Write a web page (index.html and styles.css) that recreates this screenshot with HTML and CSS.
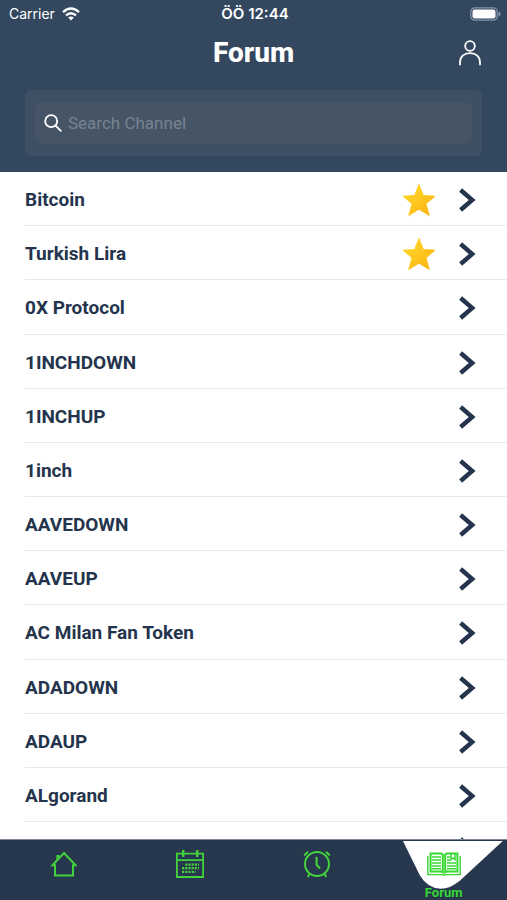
FILE: index.html
```html
<!DOCTYPE html>
<html lang="en">
<head>
<meta charset="utf-8">
<meta name="viewport" content="width=device-width, initial-scale=1">
<title>Forum</title>
<link rel="stylesheet" href="styles.css">
</head>
<body>
<svg class="defs" aria-hidden="true">
  <defs>
    <linearGradient id="gold" x1="0" y1="0" x2="1" y2="1">
      <stop offset="0" stop-color="#ffdc2e"/>
      <stop offset="1" stop-color="#fdb110"/>
    </linearGradient>
    <symbol id="star" viewBox="0 0 34 34">
      <path fill="url(#gold)" stroke="url(#gold)" stroke-width="1" stroke-linejoin="round" d="M17 1.5 21.4 12.5 33 13.2 24 20.8 27.2 32.4 17 26.2 6.8 32.4 10 20.8 1 13.2 12.6 12.5Z"/>
    </symbol>
    <symbol id="chevron" viewBox="0 0 18 24">
      <path fill="none" stroke="#24344c" stroke-width="4.4" d="M1.6 2 13.2 12 1.6 22"/>
    </symbol>
  </defs>
</svg>
<div class="app">
  <header class="header">
    <div class="status">
      <span class="carrier">Carrier
        <svg width="18" height="14" viewBox="0 0 18 14" aria-hidden="true"><g fill="none" stroke="#fff" stroke-width="2.4"><path d="M1 5.2Q9-2 17 5.2"/><path d="M4 8.4Q9 4 14 8.4"/></g><path fill="#fff" d="M6.2 10.6Q9 8.4 11.8 10.6L9 13.6Z"/></svg>
      </span>
      <span class="clock">ÖÖ 12:44</span>
      <svg class="battery" width="31" height="14" viewBox="0 0 31 14" aria-hidden="true"><rect x=".8" y=".8" width="26.4" height="12.4" rx="4" fill="none" stroke="#8795a6" stroke-width="1.2"/><rect x="2.5" y="2.5" width="23" height="9" rx="2.2" fill="#fff"/><path fill="#8795a6" d="M28.4 4.6Q30.6 5.4 30.6 7T28.4 9.4Z"/></svg>
    </div>
    <div class="titlebar">
      <h1>Forum</h1>
      <button class="profile" type="button" aria-label="Profile">
        <svg width="24" height="26" viewBox="0 0 24 26" aria-hidden="true"><g fill="none" stroke="#fff" stroke-width="1.8" stroke-linecap="round"><circle cx="12" cy="6" r="4.8"/><path d="M2 24.5V22.5C2 16.5 6 13.2 12 13.2S22 16.5 22 22.5V24.5"/></g></svg>
      </button>
    </div>
    <div class="search-panel">
      <label class="search">
        <svg width="18" height="18" viewBox="0 0 18 18" aria-hidden="true"><g fill="none" stroke="#fff" stroke-width="1.8" stroke-linecap="round"><circle cx="7.2" cy="7.2" r="6"/><path d="M11.6 11.6 16.8 16.8"/></g></svg>
        <input type="search" placeholder="Search Channel" aria-label="Search Channel">
      </label>
    </div>
  </header>
  <main class="channels">
    <a class="channel" href="#"><span>Bitcoin</span><svg class="star"><use href="#star"/></svg><svg class="chevron"><use href="#chevron"/></svg></a>
    <a class="channel" href="#"><span>Turkish Lira</span><svg class="star"><use href="#star"/></svg><svg class="chevron"><use href="#chevron"/></svg></a>
    <a class="channel" href="#"><span>0X Protocol</span><svg class="chevron"><use href="#chevron"/></svg></a>
    <a class="channel" href="#"><span>1INCHDOWN</span><svg class="chevron"><use href="#chevron"/></svg></a>
    <a class="channel" href="#"><span>1INCHUP</span><svg class="chevron"><use href="#chevron"/></svg></a>
    <a class="channel" href="#"><span>1inch</span><svg class="chevron"><use href="#chevron"/></svg></a>
    <a class="channel" href="#"><span>AAVEDOWN</span><svg class="chevron"><use href="#chevron"/></svg></a>
    <a class="channel" href="#"><span>AAVEUP</span><svg class="chevron"><use href="#chevron"/></svg></a>
    <a class="channel" href="#"><span>AC Milan Fan Token</span><svg class="chevron"><use href="#chevron"/></svg></a>
    <a class="channel" href="#"><span>ADADOWN</span><svg class="chevron"><use href="#chevron"/></svg></a>
    <a class="channel" href="#"><span>ADAUP</span><svg class="chevron"><use href="#chevron"/></svg></a>
    <a class="channel" href="#"><span>ALgorand</span><svg class="chevron"><use href="#chevron"/></svg></a>
    <div class="channel peek"><svg class="chevron"><use href="#chevron"/></svg></div>
  </main>
  <nav class="tabs">
    <a href="#" aria-label="Home">
      <svg width="28" height="28" viewBox="0 0 28 28" aria-hidden="true"><g fill="none" stroke="#43d13c" stroke-width="2"><path d="M3.4 15.2H6V25.5H24V15.2H26.6L15 3Z"/><path d="M8.4 9.8V6H10.6"/></g></svg>
    </a>
    <a href="#" aria-label="Calendar">
      <svg width="28" height="28" viewBox="0 0 28 28" aria-hidden="true"><g fill="none" stroke="#43d13c"><path stroke-width="1.8" d="M.9 3.6H27.1V27H.9ZM1 10.2H27"/><path stroke-width="2.4" d="M7.2 0V7M21.2 0V7"/><path stroke-width="2.2" stroke-dasharray="2.2 1" d="M9.2 14.6H23M6 18.2H23M6 21.8H19.6"/></g></svg>
    </a>
    <a href="#" aria-label="Alarm">
      <svg width="28" height="28" viewBox="0 0 28 28" aria-hidden="true"><g fill="none" stroke="#43d13c" stroke-width="2"><circle cx="14" cy="14" r="12"/><path stroke-width="2.2" d="M13.6 6.8V14.8L17 18.4"/><path d="M1.2 5.4 5 1.8M26.8 5.4 23 1.8M6.8 23.4 4.8 27M21.2 23.4 23.2 27"/></g></svg>
    </a>
    <a class="active" href="#" aria-current="page">
      <svg class="notch" viewBox="0 0 127 60" preserveAspectRatio="none" aria-hidden="true"><path fill="#fff" d="M23 1H123L80 40Q70 48 61 48 48 48 40 35Z"/></svg>
      <svg class="book" width="34" height="24" viewBox="0 0 34 24" aria-hidden="true"><g fill="none" stroke="#37d832"><path stroke-width="1.4" d="M.8 4V22.6H15.4L17 23.2 18.6 22.6H33.2V4"/><path stroke-width="2" d="M3.6 1.6H14.4L15.8 2.6V20.4L14.4 19.6H3.6ZM30.4 1.6H19.6L18.2 2.6V20.4L19.6 19.6H30.4Z"/><path stroke-width="1.5" d="M5 4.9H14M5 7.9H14M5 10.9H14M5 13.9H14M5 16.8H14M20 4.9H23M20 7.9H23M20 10.9H29M20 13.9H29M20 16.8H29M24 1V7.6L26 6 28 7.6V1"/></g></svg>
      <span>Forum</span>
    </a>
  </nav>
</div>
</body>
</html>
```
FILE: styles.css
```css
* {
  box-sizing: border-box;
}

body {
  margin: 0;
  font-family: Roboto, "Liberation Sans", sans-serif;
  color: #24344c;
  background: #fff;
}

a {
  color: inherit;
  text-decoration: none;
}

svg {
  display: block;
  flex: none;
}

.defs {
  position: absolute;
  width: 0;
  height: 0;
}

.app {
  display: flex;
  flex-direction: column;
  min-height: 100vh;
}

.header {
  padding-bottom: 16px;
  background: #33475e;
  color: #fff;
}

.status {
  display: grid;
  grid-template-columns: 1fr auto 1fr;
  align-items: center;
  height: 28px;
  padding: 0 6px 0 9px;
  font: 500 14px/20px Inter, sans-serif;
}

.carrier {
  display: flex;
  align-items: center;
  gap: 7px;
  font-weight: 400;
}

.clock {
  font-size: 15px;
  font-weight: 600;
}

.battery {
  justify-self: end;
}

.titlebar {
  display: grid;
  grid-template-columns: 1fr auto 1fr;
  align-items: center;
  height: 50px;
  padding: 0 25px;
}

h1 {
  grid-column: 2;
  margin: 0;
  font-size: 28px;
  line-height: 32px;
  font-weight: 800;
}

.profile {
  justify-self: end;
  padding: 0;
  border: 0;
  background: none;
}

.search-panel {
  margin: 12px 25px 0;
  padding: 12px 10px;
  border-radius: 6px;
  background: #3f5064;
}

.search {
  display: flex;
  align-items: center;
  gap: 6px;
  height: 42px;
  padding: 0 9px;
  border-radius: 8px;
  background: #465566;
}

.search input {
  flex: 1;
  min-width: 0;
  padding: 0;
  border: 0;
  outline: 0;
  background: none;
  color: #fff;
  font: 400 17px/24px Roboto, sans-serif;
}

.search input::placeholder {
  color: #768392;
}

.channels {
  flex: 1;
  display: grid;
  grid-template-rows: repeat(12, minmax(54px, 1fr)) 17px;
  overflow: hidden;
}

.channel {
  display: flex;
  align-items: center;
  gap: 23px;
  margin-left: 25px;
  padding: 3px 30px 0 0;
  border-bottom: 1px solid #e9e9eb;
  font-size: 19px;
  line-height: 24px;
  font-weight: 700;
}

.channel span {
  flex: 1;
}

.star {
  width: 34px;
  height: 34px;
}

.chevron {
  width: 18px;
  height: 24px;
}

.peek {
  align-items: flex-start;
  justify-content: flex-end;
  padding-top: 15px;
  border: 0;
  overflow: hidden;
}

.tabs {
  display: grid;
  grid-template-columns: repeat(4, 1fr);
  height: 61px;
  border-top: 1px solid #7d8796;
  background: #27374d;
}

.tabs a {
  position: relative;
  display: flex;
  flex-direction: column;
  align-items: center;
  padding-top: 10px;
}

.notch {
  position: absolute;
  inset: 0;
  width: 100%;
  height: 100%;
}

.book,
.active span {
  position: relative;
}

.tabs .active {
  gap: 9px;
  padding-top: 12px;
  color: #37d832;
  font-size: 13px;
  line-height: 16px;
  font-weight: 700;
}
```
